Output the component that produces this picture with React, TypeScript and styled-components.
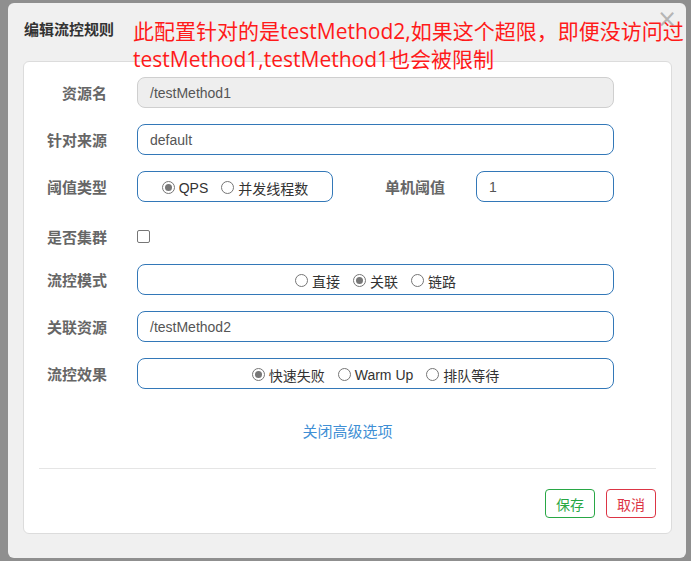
import React from "react";
import styled, { createGlobalStyle } from "styled-components";

const Global = createGlobalStyle`
  html, body {
    margin: 0;
    padding: 0;
    width: 691px;
    height: 561px;
    overflow: hidden;
    background: #8f8f8f;
  }
  * { box-sizing: border-box; }
`;

const UI_FONT = `"Liberation Sans", "Noto Sans CJK SC", sans-serif`;

const Dialog = styled.div`
  position: relative;
  margin: 3px 0 0 8px;
  width: 678px;
  height: 555px;
  background: #f0f0f0;
  border-radius: 6px;
  padding: 0 14px 0 15px;
  display: flex;
  flex-direction: column;
  font-family: ${UI_FONT};
`;

const Header = styled.div`
  height: 58px;
  padding: 17px 0 0 1px;
`;

const Title = styled.div`
  font-size: 15px;
  line-height: 20px;
  font-weight: bold;
  color: #333;
`;

const Close = styled.div`
  position: absolute;
  right: 9px;
  top: 3px;
  font-size: 24px;
  line-height: 26px;
  color: #b5b5b5;
  font-family: "DejaVu Sans", sans-serif;
`;

const Annotation = styled.div`
  position: absolute;
  left: 125px;
  top: 14px;
  z-index: 2;
  font-family: "Open Sans", "Noto Sans CJK SC", sans-serif;
  font-size: 21px;
  line-height: 28px;
  color: #ff1a1a;
  white-space: nowrap;
`;

const Panel = styled.div`
  flex: 0 0 473px;
  background: #fff;
  border: 1px solid #dcdcdc;
  border-radius: 6px;
  padding: 15px;
  display: flex;
  flex-direction: column;
`;

const Form = styled.div`
  padding-right: 42px;
  display: flex;
  flex-direction: column;
`;

const Row = styled.div<{ $h?: number; $mb?: number }>`
  display: flex;
  align-items: center;
  height: ${(p) => p.$h ?? 31}px;
  margin-bottom: ${(p) => p.$mb ?? 16}px;
`;

const Label = styled.div<{ $w?: number; $mr?: number }>`
  flex: 0 0 ${(p) => p.$w ?? 68}px;
  margin-right: ${(p) => p.$mr ?? 30}px;
  text-align: right;
  font-size: 15px;
  font-weight: bold;
  color: #666;
  white-space: nowrap;
`;

const Input = styled.div<{ $disabled?: boolean }>`
  flex: 1;
  height: 31px;
  border: 1px solid ${(p) => (p.$disabled ? "#cfcfcf" : "#3378b8")};
  background: ${(p) => (p.$disabled ? "#eeeeee" : "#fff")};
  border-radius: 8px;
  padding-left: 12px;
  display: flex;
  align-items: center;
  font-size: 14px;
  color: #555;
`;

const RadioBox = styled.div<{ $w?: number }>`
  ${(p) => (p.$w ? `flex: 0 0 ${p.$w}px;` : "flex: 1;")}
  height: 31px;
  border: 1px solid #3378b8;
  border-radius: 8px;
  display: flex;
  align-items: center;
  justify-content: center;
  gap: 13px;
  padding-top: 2px;
`;

const RadioItem = styled.label`
  display: flex;
  align-items: center;
  gap: 4px;
  font-size: 14px;
  color: #333;
  white-space: nowrap;
`;

const Circle = styled.span<{ $on?: boolean }>`
  width: 13px;
  height: 13px;
  border-radius: 50%;
  border: 1px solid #767676;
  background: #fff;
  display: flex;
  align-items: center;
  justify-content: center;
  &::after {
    content: "";
    width: 7px;
    height: 7px;
    border-radius: 50%;
    background: ${(p) => (p.$on ? "#777" : "transparent")};
  }
`;

const Check = styled.span`
  width: 13px;
  height: 13px;
  border: 1px solid #767676;
  border-radius: 2px;
  background: #fff;
`;

const Link = styled.div`
  margin-top: 15px;
  text-align: center;
  font-size: 15px;
  line-height: 24px;
  color: #3f8fd5;
`;

const Divider = styled.div`
  margin-top: 24px;
  height: 1px;
  background: #e5e5e5;
`;

const Footer = styled.div`
  margin-top: 20px;
  display: flex;
  justify-content: flex-end;
  gap: 11px;
`;

const Btn = styled.div<{ $color: string }>`
  width: 50px;
  height: 29px;
  border: 1px solid ${(p) => p.$color};
  color: ${(p) => p.$color};
  border-radius: 4px;
  background: #fff;
  display: flex;
  align-items: center;
  justify-content: center;
  font-size: 14px;
`;

function Radio({ on, children }: { on?: boolean; children: React.ReactNode }) {
  return (
    <RadioItem>
      <Circle $on={on} />
      {children}
    </RadioItem>
  );
}

export default function App() {
  return (
    <>
      <Global />
      <Dialog>
        <Header>
          <Title>编辑流控规则</Title>
        </Header>
        <Close>×</Close>
        <Annotation>
          此配置针对的是testMethod2,如果这个超限，即便没访问过
          <br />
          testMethod1,testMethod1也会被限制
        </Annotation>
        <Panel>
          <Form>
            <Row>
              <Label>资源名</Label>
              <Input $disabled>/testMethod1</Input>
            </Row>
            <Row>
              <Label>针对来源</Label>
              <Input>default</Input>
            </Row>
            <Row $mb={19}>
              <Label>阈值类型</Label>
              <RadioBox $w={196}>
                <Radio on>QPS</Radio>
                <Radio>并发线程数</Radio>
              </RadioBox>
              <Label $w={112} $mr={31}>单机阈值</Label>
              <Input>1</Input>
            </Row>
            <Row $h={30} $mb={13}>
              <Label>是否集群</Label>
              <Check />
            </Row>
            <Row>
              <Label>流控模式</Label>
              <RadioBox>
                <Radio>直接</Radio>
                <Radio on>关联</Radio>
                <Radio>链路</Radio>
              </RadioBox>
            </Row>
            <Row>
              <Label>关联资源</Label>
              <Input>/testMethod2</Input>
            </Row>
            <Row $mb={0}>
              <Label>流控效果</Label>
              <RadioBox>
                <Radio on>快速失败</Radio>
                <Radio>Warm Up</Radio>
                <Radio>排队等待</Radio>
              </RadioBox>
            </Row>
          </Form>
          <Link style={{ marginTop: 31 }}>关闭高级选项</Link>
          <Divider />
          <Footer>
            <Btn $color="#28a745">保存</Btn>
            <Btn $color="#dc3545">取消</Btn>
          </Footer>
        </Panel>
      </Dialog>
    </>
  );
}
